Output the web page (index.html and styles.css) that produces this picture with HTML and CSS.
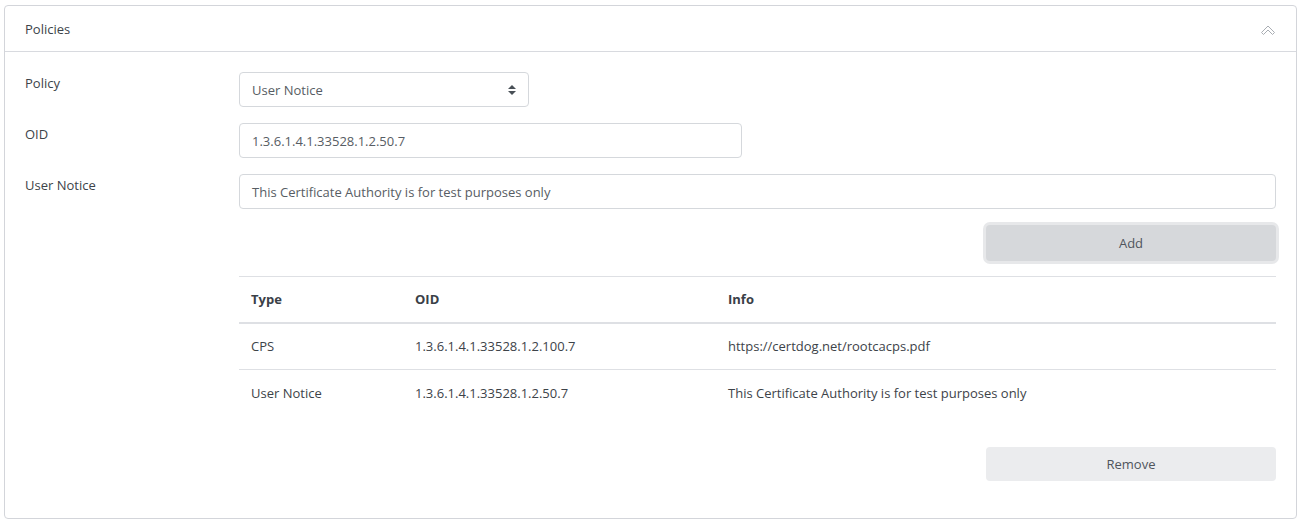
FILE: index.html
```html
<!DOCTYPE html>
<html>
<head>
<meta charset="utf-8">
<link rel="stylesheet" href="styles.css">
</head>
<body>
<div class="card">
  <div class="card-header">
    <span class="title">Policies</span>
    <svg class="chev" width="16" height="12" viewBox="0 0 16 12"><path d="M1.5 8.5 L8 2 L14.5 8.5 L12.5 10.5 L8 6 L3.5 10.5 Z" fill="none" stroke="#a9adb3" stroke-width="1" stroke-linejoin="miter"/></svg>
  </div>
  <div class="card-body">
    <div class="row">
      <label class="lbl">Policy</label>
      <div class="ctl">
        <div class="select">
          <span>User Notice</span>
          <svg width="8" height="12" viewBox="0 0 8 12"><path d="M4 1 L8 5 H0 Z M0 7 H8 L4 11 Z" fill="#495057"/></svg>
        </div>
      </div>
    </div>
    <div class="row">
      <label class="lbl">OID</label>
      <div class="ctl"><div class="input oid">1.3.6.1.4.1.33528.1.2.50.7</div></div>
    </div>
    <div class="row">
      <label class="lbl">User Notice</label>
      <div class="ctl"><div class="input">This Certificate Authority is for test purposes only</div></div>
    </div>
    <div class="row add-row">
      <div></div>
      <div class="ctl right"><button class="btn add">Add</button></div>
    </div>
    <div class="row">
      <div></div>
      <div class="ctl">
        <table class="tbl">
          <thead>
            <tr><th class="c1">Type</th><th class="c2">OID</th><th>Info</th></tr>
          </thead>
          <tbody>
            <tr><td>CPS</td><td>1.3.6.1.4.1.33528.1.2.100.7</td><td>https://certdog.net/rootcacps.pdf</td></tr>
            <tr><td>User Notice</td><td>1.3.6.1.4.1.33528.1.2.50.7</td><td>This Certificate Authority is for test purposes only</td></tr>
          </tbody>
        </table>
        <div class="right remove-wrap"><button class="btn remove">Remove</button></div>
      </div>
    </div>
  </div>
</div>
</body>
</html>
```
FILE: styles.css
```css
* { box-sizing: border-box; }
html, body { margin: 0; padding: 0; background: #fff; }
body {
  font-family: "Open Sans", "Noto Sans", sans-serif;
  font-size: 13px;
  color: #3d4349;
  padding: 5px 6px 0 4px;
}
.card {
  border: 1px solid #d3d5da;
  border-radius: 4px;
  height: 514px;
}
.card-header {
  height: 46px;
  border-bottom: 1px solid #d8dadf;
  display: flex;
  align-items: center;
  justify-content: space-between;
  padding: 0 20px 0 20px;
}
.title { color: #3d4349; }
.chev { margin-top: 2px; }
.card-body {
  padding: 20px 20px 0 20px;
}
.row {
  display: grid;
  grid-template-columns: 214px 1fr;
  margin-bottom: 16px;
}
.lbl { padding-top: 3px; line-height: 17px; }
.ctl { min-width: 0; }
.right { display: flex; justify-content: flex-end; }
.select, .input {
  height: 35px;
  border: 1px solid #d5d8dc;
  border-radius: 4px;
  padding: 0 12px;
  display: flex;
  align-items: center;
  color: #575d64;
}
.select { width: 290px; justify-content: space-between; padding-right: 12px; }
.oid { width: 503px; }
.btn {
  font-family: inherit;
  font-size: 13px;
  border: none;
  border-radius: 4px;
  height: 34px;
  width: 290px;
  color: #4f555c;
  cursor: pointer;
}
.add {
  background: #d6d8db;
  box-shadow: 0 0 0 3px #e7e8ea;
  height: 36px;
}
.add-row { margin-bottom: 15px; }
.tbl {
  width: 100%;
  border-collapse: collapse;
}
.tbl th, .tbl td {
  text-align: left;
  padding: 0 12px;
  height: 47px;
  border-top: 1px solid #dee0e4;
  color: #3d4349;
}
.tbl th {
  font-weight: 700;
  color: #3a4047;
  border-bottom: 2px solid #dee0e4;
  height: 46px;
}
.c1 { width: 164px; }
.c2 { width: 313px; }
.remove-wrap { margin-top: 30px; }
.remove { background: #ebecee; }
```
